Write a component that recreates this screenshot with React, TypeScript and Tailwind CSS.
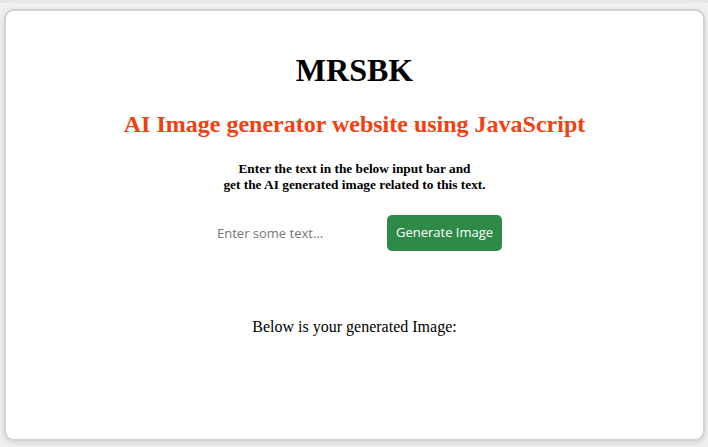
import React from 'react';

const App: React.FC = () => {
  return (
    <div className="w-[708px] h-[447px] bg-[#f0f0f0] overflow-hidden font-['Liberation_Serif','Times_New_Roman',serif] text-black">
      <div className="h-[3px] bg-[#e6e6ea]" />

      {/* Card */}
      <div className="ml-[4px] mr-[3px] mt-[6px] h-[432px] bg-white border-2 border-[#d2d2d2] rounded-[10px] shadow-[0_2px_6px_rgba(0,0,0,0.12)] flex flex-col items-center">
        <h1 className="mt-[42px] text-[32px] font-bold leading-[35px]">MRSBK</h1>

        <h2 className="mt-[23px] text-[24px] font-bold leading-[27px] text-[#f2400e]">
          AI Image generator website using JavaScript
        </h2>

        <p className="mt-[23px] text-[13.33px] font-bold leading-[16px] text-center">
          Enter the text in the below input bar and
          <br />
          get the AI generated image related to this text.
        </p>

        <div className="mt-[22px] flex items-center gap-[10px]">
          <input
            type="text"
            placeholder="Enter some text..."
            className="w-[170px] h-[36px] px-[10px] text-[13px] font-['Open_Sans','Noto_Sans',sans-serif] outline-none placeholder:text-[#767676] bg-transparent"
          />
          <button className="w-[115px] h-[36px] rounded-[5px] bg-[#2e8b47] text-white text-[13px] font-['Open_Sans','Noto_Sans',sans-serif]">
            Generate Image
          </button>
        </div>

        <p className="mt-[67px] text-[16px] leading-[18px]">Below is your generated Image:</p>
      </div>
    </div>
  );
};

export default App;
